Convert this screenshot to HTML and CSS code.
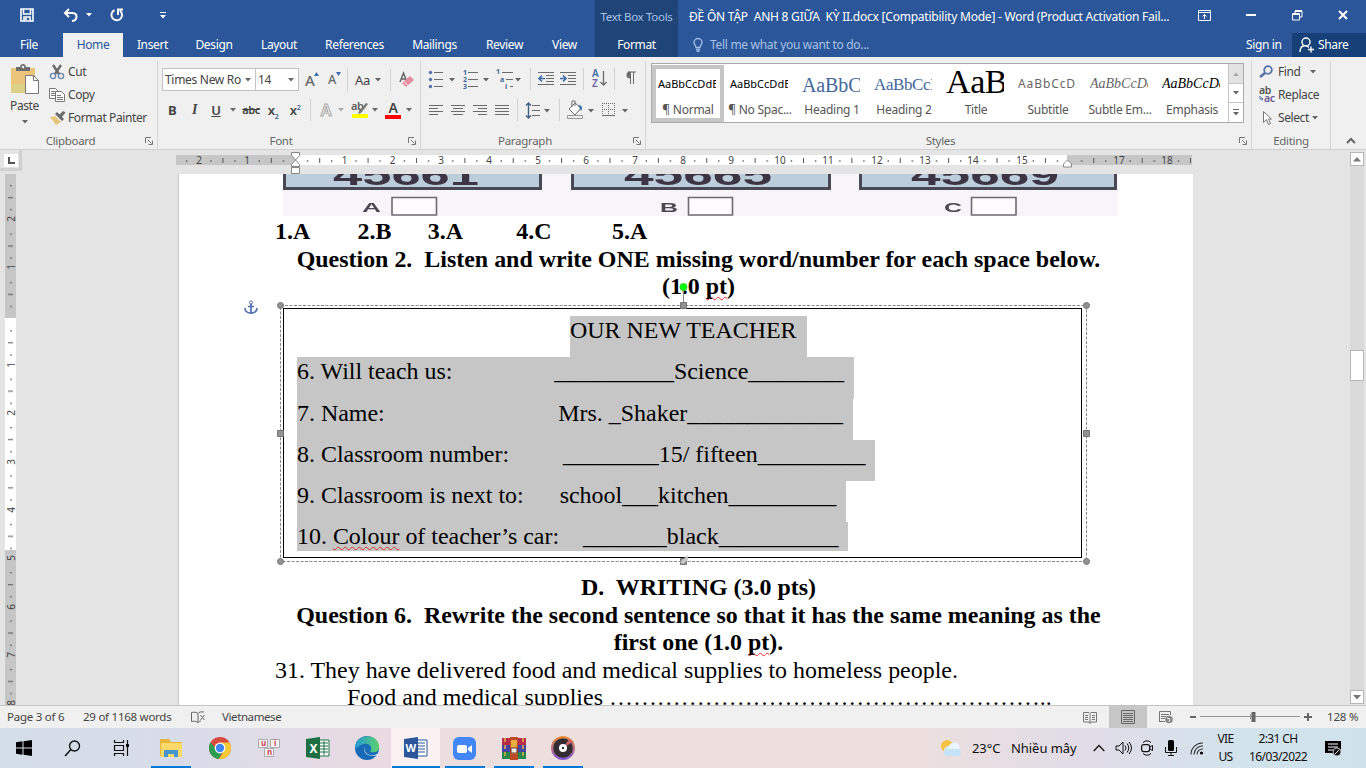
FILE: index.html
```html
<!DOCTYPE html>
<html lang="vi">
<head>
<meta charset="utf-8">
<title>ĐỀ ÔN TẬP ANH 8 GIỮA KỲ II.docx - Word</title>
<link rel="stylesheet" href="styles.css">
</head>
<body>
<svg class="defs" width="0" height="0">
  <symbol id="caret" viewBox="0 0 6 4"><path d="M0 0h6L3 3.4z" fill="#666"/></symbol>
  <symbol id="launch" viewBox="0 0 8 8"><path d="M.5 6V.5H6M3 3l3.500 3.500M7.500 3.500v4h-4" fill="none" stroke="#777"/></symbol>
</svg>

<header class="head">
  <div class="title-row">
    <svg class="ic save" width="14" height="14"><path d="M1 1h12v12H1zM3.500 1v5h7V1M4 13V9h6v4M6 10v2" fill="none" stroke="#fff" stroke-width="1.600"/></svg>
    <svg class="ic undo" width="15" height="13"><path d="M6 0L2 4l4 4M2 4h7c6 0 6 7 0 8" fill="none" stroke="#fff" stroke-width="2"/></svg>
    <svg class="ic undo-caret" width="6" height="4"><path d="M0 0h6L3 3.400z" fill="#fff"/></svg>
    <svg class="ic redo" width="14" height="14"><path d="M4.500 2.200a5.300 5.300 0 1 0 5.500.600M8 7V1.500h5" fill="none" stroke="#fff" stroke-width="1.900"/></svg>
    <svg class="ic custom" width="6" height="7"><path d="M0 .5h6" stroke="#fff"/><path d="M0 3h6L3 6.400z" fill="#fff"/></svg>
    <span class="ctx-name">Text Box Tools</span>
    <span class="doc-name">ĐỀ ÔN TẬP&nbsp; ANH 8 GIỮA&nbsp; KỲ II.docx [Compatibility Mode] - Word (Product Activation Fail...</span>
    <svg class="ic win-opts" width="13" height="11"><path d="M.5.500h12v10H.5zM.5 2.500h12M6.500 9V4.500M4.500 6.500l2-2 2 2" fill="none" stroke="#fff"/></svg>
    <svg class="ic win-min" width="10" height="2"><path d="M0 1h10" stroke="#fff" stroke-width="2"/></svg>
    <svg class="ic win-max" width="11" height="11"><path d="M3 3V1h7v6H8M.5 4h7v6h-7z" fill="none" stroke="#fff"/><path d="M3 1h7M.5 4h7" stroke="#fff" stroke-width="2"/></svg>
    <svg class="ic win-close" width="10" height="10"><path d="M1 1l8 8M9 1L1 9" stroke="#fff" stroke-width="2"/></svg>
  </div>
  <nav class="tabs">
    <span class="tab file">File</span><span class="tab home">Home</span><span class="tab insert">Insert</span><span class="tab design">Design</span><span class="tab layout">Layout</span><span class="tab refs">References</span><span class="tab mail">Mailings</span><span class="tab review">Review</span><span class="tab view">View</span><span class="tab format">Format</span>
    <svg class="bulb" width="10" height="14"><path d="M3 9.500C3 7 1 7 1 4.500a4 4 0 0 1 8 0C9 7 7 7 7 9.500zM3 11.500h4M3.500 13.200h3" fill="none" stroke="#9db9e4" stroke-width="1.400"/></svg>
    <span class="tell">Tell me what you want to do...</span>
    <span class="signin">Sign in</span>
    <span class="share"><svg width="16" height="16"><path d="M1 15c0-4 2-6 4.500-6.500M7 1a4 4 0 1 1 0 8 4 4 0 0 1 0-8M8 9l2 1.500M12 9.500v6M9 12.500h6" fill="none" stroke="#fff" stroke-width="1.400"/></svg>Share</span>
  </nav>
</header>

<section class="ribbon">
  <div class="group clipboard">
    <div class="paste">
      <svg width="30" height="32"><path d="M1 4h24v25H1z" fill="#eac57a"/><path d="M1 20h14v9H1z" fill="#dcd287"/><path d="M6 7V3h4c0-4 6-4 6 0h4v4z" fill="#6d6d6d"/><circle cx="13" cy="3" r="1.300" fill="#f0f0f0"/><path d="M15.500 11.500h8l5 5v13h-13z" fill="#fff" stroke="#777"/><path d="M23.500 11.500v5h5" fill="none" stroke="#777"/></svg>
      <span>Paste</span><svg class="car" width="6" height="4"><use href="#caret"/></svg>
    </div>
    <div class="clip-list">
      <div><svg width="16" height="16"><path d="M4 1l6 9M12 1L6 10" stroke="#6a6a6a" stroke-width="2.400"/><circle cx="4" cy="12" r="2.600" fill="none" stroke="#6d87ab" stroke-width="1.400"/><circle cx="12" cy="12" r="2.600" fill="none" stroke="#6d87ab" stroke-width="1.400"/></svg><span>Cut</span></div>
      <div><svg width="16" height="16"><path d="M.5 1.500h6l2 2v8h-8zM2 4.500h4M2 6.500h4M2 8.500h4" fill="#fff" stroke="#777"/><path d="M6.500 4.500h6l3 3v7h-9zM8 8.500h4M8 10.500h6M8 12.500h6" fill="#fff" stroke="#777"/></svg><span>Copy</span></div>
      <div><svg width="17" height="16"><path d="M1 7l5-1 6 6-5 3z" fill="#e6c67b"/><path d="M6 4l2-2 7 7-2 2z" fill="#6b6b6b"/><path d="M10 5l4-4 2.500 1.500-4 5z" fill="#6b6b6b"/></svg><span>Format Painter</span></div>
    </div>
    <div class="caption">Clipboard</div><svg class="launch" width="8" height="8"><use href="#launch"/></svg>
  </div>

  <div class="group font">
    <div class="row r1">
      <span class="combo face">Times New Ro<svg width="6" height="4"><use href="#caret"/></svg></span><span class="combo size">14<svg width="6" height="4"><use href="#caret"/></svg></span>
      <span class="grow">A<svg width="5" height="4"><path d="M0 4h5L2.500 0z" fill="#3f6fae"/></svg></span>
      <span class="shrink">A<svg width="5" height="4"><path d="M0 0h5L2.500 4z" fill="#3f6fae"/></svg></span>
      <i class="sep s1"></i><span class="case">Aa</span><svg class="car" width="6" height="4"><use href="#caret"/></svg><i class="sep s2"></i>
      <svg class="eraser" width="16" height="16"><path d="M1 10L4.500 1 8 10M2.500 7h4" fill="none" stroke="#666" stroke-width="1.500"/><path d="M3 11l8-7 4 4-8 7z" fill="#e78ba0"/><path d="M5 9.500l4 4" stroke="#fff"/></svg>
    </div>
    <div class="row r2">
      <b class="w24">B</b><em class="w21">I</em><u class="w22">U</u><span class="w12"><svg width="6" height="4"><use href="#caret"/></svg></span><s class="w24">abc</s><span class="w20 xs">x<sub>2</sub></span><span class="w24 xs">x<sup>2</sup></span><i class="sep s3"></i>
      <span class="w24 hollow">A</span><svg class="pale" width="6" height="4"><use href="#caret"/></svg>
      <span class="hilite"><svg width="18" height="18"><text x="0" y="9" font-size="11" font-weight="600" fill="#5f5f5f">ab</text><path d="M15 2l2 1-7 9-3 1 1-3z" fill="#777"/><path d="M1 13h16v4H1z" fill="#ff0"/></svg></span><svg width="6" height="4"><use href="#caret"/></svg>
      <span class="fcolor">A</span><svg class="last" width="6" height="4"><use href="#caret"/></svg>
    </div>
    <div class="caption">Font</div><svg class="launch" width="8" height="8"><use href="#launch"/></svg>
  </div>

  <div class="group para">
    <svg class="prow1" width="216" height="24" fill="none" stroke="#6b6b6b">
      <path d="M7 5.500h9M7 12.500h9M7 19.500h9M41 5.500h10M41 12.500h10M41 19.500h10M75 5.500h11M79 12.500h7M83 19.500h3" />
      <g fill="#5673a8" stroke="none"><circle cx="3.500" cy="5.500" r="1.700"/><circle cx="3.500" cy="12.500" r="1.700"/><circle cx="3.500" cy="19.500" r="1.700"/></g>
      <g fill="#3e6595" stroke="none" font-size="7" font-weight="700"><text x="36" y="8">1</text><text x="36" y="15">2</text><text x="36" y="22">3</text><text x="69" y="7">1</text><text x="73" y="15">a</text><text x="78" y="22">i</text></g>
      <g fill="#666" stroke="none"><path d="M22 11h6l-3 3.400zM56 11h6l-3 3.400zM88 11h6l-3 3.400z"/></g>
      <path d="M103.500 1v22M156.500 1v22M187.500 1v22" stroke="#d0d0d0"/>
      <path d="M111 5.500h16M119 8.500h8M119 11.500h8M119 14.500h8M111 17.500h16M133 5.500h16M141 8.500h8M141 11.500h8M141 14.500h8M133 17.500h16"/>
      <path d="M118 11.500h-6m3-3l-3 3 3 3M133 11.500h6m-3-3l3 3-3 3" stroke="#416ca6" stroke-width="1.700"/>
      <g stroke="none" font-size="10" font-weight="600"><text x="165" y="10" fill="#416ca6">A</text><text x="165" y="20" fill="#7161a5">Z</text></g><path d="M176.500 4v14m-3-3l3 3 3-3" stroke-width="1.300"/>
      <path d="M203.500 5v12M206.500 5v12M201 5h8" /><path d="M203 4.500a3.500 3.500 0 0 0 0 7z" fill="#6b6b6b" stroke="none"/>
    </svg>
    <svg class="prow2" width="216" height="24" fill="none" stroke="#6b6b6b">
      <path d="M2 6.500h14M2 9.500h9M2 12.500h14M2 15.500h9M24 6.500h14M26 9.500h10M24 12.500h14M26 15.500h10M46 6.500h14M51 9.500h9M46 12.500h14M51 15.500h9M68 6.500h14M68 9.500h14M68 12.500h14M68 15.500h14M105 6.500h8M105 11.500h8M105 16.500h8"/>
      <path d="M101.500 4v15m-2.500-12.500l2.500-2.500 2.500 2.500M99 16.500l2.500 2.500 2.500-2.500" stroke="#426280" stroke-width="1.400"/>
      <g fill="#666" stroke="none"><path d="M117 10h6l-3 3.400zM161 10h6l-3 3.400zM195 10h6l-3 3.400z"/></g>
      <path d="M90.500 0v22M132.500 0v22" stroke="#d0d0d0"/>
      <path d="M142 10l6-6 6 5-6 7zM145 8V2h3v5" fill="#fff"/><path d="M151 6c4 0 5 3 3 6z" fill="#3d6da9" stroke="none"/><path d="M140.500 16.500h15v3h-15z" stroke="#999"/>
      <path d="M175.500 4v12M181.500 4v12M187.500 4v12M175 4.500h13M175 10.500h13" stroke-dasharray="1 1"/><path d="M175 16.500h13"/>
    </svg>
    <div class="caption">Paragraph</div><svg class="launch" width="8" height="8"><use href="#launch"/></svg>
  </div>

  <div class="group styles">
    <div class="gallery">
      <div class="style on"><p class="pv n">AaBbCcDdE</p><span>¶ Normal</span></div>
      <div class="style"><p class="pv n">AaBbCcDdE</p><span>¶ No Spac...</span></div>
      <div class="style"><p class="pv h1">AaBbC</p><span>Heading 1</span></div>
      <div class="style"><p class="pv h2">AaBbCcD</p><span>Heading 2</span></div>
      <div class="style"><p class="pv ti">AaB</p><span>Title</span></div>
      <div class="style"><p class="pv st">AaBbCcD</p><span>Subtitle</span></div>
      <div class="style"><p class="pv se">AaBbCcDd</p><span>Subtle Em...</span></div>
      <div class="style"><p class="pv em">AaBbCcDd</p><span>Emphasis</span></div>
      <div class="gscroll"><div class="off"><svg width="6" height="4"><path d="M0 4h6L3 .6z" fill="#aaa"/></svg></div><div><svg width="6" height="4"><use href="#caret"/></svg></div><div><svg width="6" height="7"><path d="M0 .5h6" stroke="#666"/><path d="M0 3h6L3 6.400z" fill="#666"/></svg></div></div>
    </div>
    <div class="caption">Styles</div><svg class="launch" width="8" height="8"><use href="#launch"/></svg>
  </div>

  <div class="group editing">
    <div class="edit-list">
      <div><svg width="16" height="14"><circle cx="9" cy="5" r="3.800" fill="none" stroke="#5673a8" stroke-width="1.800"/><path d="M6 8l-5 4" stroke="#5673a8" stroke-width="2.600"/></svg><span class="find">Find</span><svg width="6" height="4"><use href="#caret"/></svg></div>
      <div><svg width="16" height="18"><text x="0" y="8" font-size="10.500" font-weight="600" fill="#555">ab</text><text x="5" y="16" font-size="10.500" font-weight="600" fill="#6b5c96">ac</text><path d="M1 10v3h3M2.500 11.500L4 13l-1.500 1.500" stroke="#3d6da9" fill="none"/></svg><span class="repl">Replace</span></div>
      <div><svg width="16" height="16"><path d="M4.500 1.500v11l3-3 2 5 2-1-2-4.500h3z" fill="#fff" stroke="#777"/></svg><span class="sel">Select</span><svg width="6" height="4"><use href="#caret"/></svg></div>
    </div>
    <div class="caption">Editing</div>
  </div>
  <svg class="collapse" width="10" height="7"><path d="M1 6l4-4 4 4" fill="none" stroke="#666" stroke-width="2"/></svg>
</section>

<main class="work">
  <div class="side">
    <div class="corner"><svg width="14" height="13"><path d="M5 3v6h6" fill="none" stroke="#555" stroke-width="2"/></svg></div>
    <svg class="vruler" width="11" height="531">
      <defs><pattern id="vt" width="11" height="48.380" patternUnits="userSpaceOnUse" y="-0.750"><path d="M5 12.500h2M5 36.500h2M3 24.500h5" stroke="#555"/></pattern></defs>
      <path d="M0 0h11v531H0z" fill="#c6c6c6"/><path d="M0 144h11v232H0z" fill="#fff"/><path d="M0 0h11v531H0z" fill="url(#vt)"/>
      <g class="num"><text transform="translate(10 45)rotate(-90)">2</text><text transform="translate(10 93)rotate(-90)">1</text><text transform="translate(10 191)rotate(-90)">1</text><text transform="translate(10 239)rotate(-90)">2</text><text transform="translate(10 288)rotate(-90)">3</text><text transform="translate(10 336)rotate(-90)">4</text><text transform="translate(10 384)rotate(-90)">5</text><text transform="translate(10 433)rotate(-90)">6</text><text transform="translate(10 481)rotate(-90)">7</text><text transform="translate(10 529)rotate(-90)">8</text></g>
    </svg>
  </div>
  <div class="canvas">
    <svg class="hruler" width="1016" height="24">
      <defs><pattern id="ht" width="48.380" height="24" patternUnits="userSpaceOnUse" x="22.740"><path d="M12.100 10v2M36.300 10v2M24.200 8v5" stroke="#555"/></pattern></defs>
      <path d="M0 5h1016v10H0z" fill="#c6c6c6"/><path d="M119 5h772v10H119z" fill="#fff"/><path d="M0 5h1016v10H0z" fill="url(#ht)"/>
      <g class="num"><text x="23" y="14">2</text><text x="71" y="14">1</text><text x="168.500" y="14">1</text><text x="216.500" y="14">2</text><text x="265" y="14">3</text><text x="313" y="14">4</text><text x="362" y="14">5</text><text x="410" y="14">6</text><text x="459" y="14">7</text><text x="507" y="14">8</text><text x="555" y="14">9</text><text x="604" y="14">10</text><text x="652" y="14">11</text><text x="701" y="14">12</text><text x="749" y="14">13</text><text x="797" y="14">14</text><text x="846" y="14">15</text><text x="943" y="14">17</text><text x="991" y="14">18</text></g>
      <path d="M115.500 2.500h8v3l-4 4.500-4-4.500zM115.500 16.500v-2l4-4.500 4 4.500v2zM115.500 17.500h8v6h-8zM887.500 17v-3l4-4 4 4v3z" fill="#fff" stroke="#888"/>
    </svg>
    <article class="page">
      <svg class="scan" width="835" height="42">
        <path d="M0 0h835v42H0z" fill="#f7f4fa"/>
        <g fill="#bccddc" stroke="#4b4855" stroke-width="3"><path d="M1.500-5v19.500h256V-5z"/><path d="M289.500-5v19.500h257V-5z"/><path d="M577.500-5v19.500h255V-5z"/></g>
        <g class="digits"><text x="50" y="10.500" textLength="146" lengthAdjust="spacingAndGlyphs">45661</text><text x="341" y="10.500" textLength="148" lengthAdjust="spacingAndGlyphs">45665</text><text x="628" y="10.500" textLength="148" lengthAdjust="spacingAndGlyphs">45669</text></g>
        <g class="abc"><text x="79" y="38" textLength="19" lengthAdjust="spacingAndGlyphs">A</text><text x="377" y="38" textLength="18" lengthAdjust="spacingAndGlyphs">B</text><text x="661" y="38" textLength="18" lengthAdjust="spacingAndGlyphs">C</text></g>
        <g fill="#fdfbfe" stroke="#6d6a72" stroke-width="1.600"><path d="M109 23.500h44.500v17.500h-44.500zM405.500 23.500h44v17.500h-44zM688.500 23.500h44.500v17.500h-44.500z"/></g>
      </svg>
      <div class="text">
        <p class="bold answers">1.A        2.B      3.A         4.C          5.A</p>
        <p class="bold mid">Question 2.  Listen and write ONE missing word/number for each space below.</p>
        <p class="bold mid">(1.0 <span class="typo">pt</span>)</p>
      </div>
      <div class="box">
        <svg class="anchor" width="14" height="15"><path d="M7 4v9M4 6.500h6M1 8c0 7 12 7 12 0" fill="none" stroke="#4f6fae" stroke-width="1.700"/><circle cx="7" cy="2.500" r="1.500" fill="none" stroke="#4f6fae"/></svg>
        <div class="mid"><p class="hl">OUR NEW TEACHER</p></div>
        <p class="hl">6. Will teach us:                 __________Science________</p>
        <p class="hl">7. Name:                             Mrs. _Shaker_____________</p>
        <p class="hl">8. Classroom number:         ________15/ fifteen_________</p>
        <p class="hl">9. Classroom is next to:      school___kitchen_________</p>
        <p class="hl end">10. <span class="typo">Colour</span> of teacher’s car:    _______black__________</p>
        <svg class="frame" width="816" height="284"><path d="M5.500 24.500h806v256h-806z" fill="none" stroke="#888" stroke-dasharray="3 1.500"/><path d="M408.500 8v14" stroke="#888"/><circle cx="408.500" cy="6" r="3.700" fill="#0f0" stroke="#5a5" stroke-width=".5"/>
          <g fill="#929292" stroke="#747474"><circle cx="5.500" cy="24.500" r="3"/><circle cx="811.500" cy="24.500" r="3"/><circle cx="5.500" cy="280.500" r="3"/><circle cx="811.500" cy="280.500" r="3"/><path d="M405.500 21.500h6v6h-6zM2.500 149.500h6v6h-6zM808.500 149.500h6v6h-6zM405.500 277.500h6v6h-6z"/></g><path d="M405 281l8-7v5l-5 4z" fill="#c6c6c6"/></svg>
      </div>
      <div class="text">
        <p class="bold mid">D.  WRITING (3.0 pts)</p>
        <p class="bold mid">Question 6.  Rewrite the second sentence so that it has the same meaning as the</p>
        <p class="bold mid">first one (1.0 <span class="typo">pt</span>).</p>
        <p>31. They have delivered food and medical supplies to homeless people.</p>
        <p class="indent">Food and medical supplies ………………………………………………..</p>
      </div>
    </article>
  </div>
  <div class="vscroll"><div class="sb"><svg width="8" height="5"><path d="M0 4.500h8L4 0z" fill="#777"/></svg></div><div class="thumb"></div><div class="sb"><svg width="8" height="5"><path d="M0 0h8L4 4.500z" fill="#777"/></svg></div></div>
</main>

<footer class="status">
  <span class="pg">Page 3 of 6</span><span class="wc">29 of 1168 words</span>
  <svg class="proof" width="15" height="14"><path d="M7 12.500C5 11 3 11 .5 11.500v-9C3 2 5 2 7 3.500zM7 3.500C8 2 10 1.500 13 2M7 12.500c1-1 2-1.500 3-1.500M9.500 5l4 5M13.500 5l-4 5" fill="none" stroke="#666"/></svg>
  <span class="lang">Vietnamese</span>
  <svg class="read" width="14" height="13"><path d="M7 12.500L6 11H.5V1.500H6l1 1 1-1h5.500V11H8zM7 3v9M2 4.500h3M2 6.500h3M2 8.500h3M9 4.500h3M9 6.500h3M9 8.500h3" fill="none" stroke="#777"/></svg>
  <span class="print"><svg width="14" height="14"><path d="M.5.500h13v13H.5zM2 3.500h10M2 5.500h10M2 7.500h10M2 9.500h10M2 11.500h10" fill="none" stroke="#666"/></svg></span>
  <svg class="web" width="15" height="14"><path d="M.5 11.500v-10h11V5M2 4.500h8M2 6.500h5M2 8.500h4M0 11.500h6" fill="none" stroke="#777"/><circle cx="10" cy="9.500" r="3.800" fill="#888"/><path d="M8 8l3 1-1 3" stroke="#eee" fill="none"/></svg>
  <svg class="zoomer" width="124" height="12"><path d="M1 6h6M115 6h8M119 2v8" stroke="#666" stroke-width="2"/><path d="M11 5.500h100M61.500 3v5" stroke="#999"/><path d="M62.500 1h4v10h-4z" fill="#666"/></svg>
  <span class="pct">128 %</span>
</footer>

<footer class="taskbar">
  <div class="slot"><svg width="16" height="16"><path d="M0 2.300l6.500-1v6.200H0zM7.500 1.200L16 0v7.500H7.500zM0 8.500h6.500v6.200L0 13.700zM7.500 8.500H16V16l-8.500-1.200z"/></svg></div>
  <div class="slot"><svg width="17" height="17"><circle cx="10.500" cy="6" r="5" fill="none" stroke="#111" stroke-width="1.400"/><path d="M7 9.500L1 16" stroke="#111" stroke-width="1.500"/></svg></div>
  <div class="slot"><svg width="17" height="16"><path d="M1.500 0v2.500h9V0M1.500 5.500h9v5h-9zM1.500 16v-2.500h9V16M14.500 0v16" fill="none" stroke="#111" stroke-width="1.200"/><path d="M13 4h3v3h-3z"/></svg></div>
  <div class="slot open explorer"><svg width="22" height="20"><path d="M0 1h9l2 3h11v14H0z" fill="#e9b63c"/><path d="M1 5h21v14H1z" fill="#fbd867"/><path d="M4 19v-7h14v7h-4v-3H8v3z" fill="#4595cf"/></svg></div>
  <div class="slot"><svg width="22" height="22"><circle cx="11" cy="11" r="11" fill="#d94b3f"/><path d="M1.500 5.500A11 11 0 0 0 9.500 22l5-9-7-1z" fill="#2c9c50"/><path d="M11 5.500h9.500A11 11 0 0 1 10 22l5.500-9z" fill="#f6ca35"/><circle cx="11" cy="11" r="5.400" fill="#fff"/><circle cx="11" cy="11" r="4.200" fill="#4285f4"/></svg></div>
  <div class="slot"><svg width="24" height="20"><g fill="#f4f4f4" stroke="#aaa"><path d="M1.500 1.500h9v8h-9zM13.500 1.500h9v8h-9zM7.500 10.500h9v8h-9z"/></g><g font-size="8" font-weight="700" fill="#cf3f57"><text x="4" y="8">u</text><text x="17" y="8">i</text><text x="10" y="17">n</text></g></svg></div>
  <div class="slot"><svg width="24" height="22"><path d="M12 3h11v16H12z" fill="#fff" stroke="#217346"/><path d="M13 6h9M13 9h9M13 12h9M13 15h9M18 4v14" stroke="#217346"/><path d="M0 2l14-2v22L0 20z" fill="#1d7044"/><text x="3.500" y="15.500" font-size="12" font-weight="700" fill="#fff">X</text></svg></div>
  <div class="slot"><svg width="24" height="24"><defs><linearGradient id="eg" x2="1"><stop stop-color="#249bd8"/><stop offset="1" stop-color="#5bd06c"/></linearGradient></defs><circle cx="12" cy="12" r="12" fill="#176bb7"/><path d="M0 12C1-4 24-3 24 11c0 5-5 6-9 5 3-4 0-9-6-8-5 1-9 6-9 4z" fill="url(#eg)"/><path d="M11 10c-4 5 2 12 11 8l1 1c-10 3-17-3-12-9z" fill="#e9f2f8"/></svg></div>
  <div class="slot open active"><svg width="24" height="22"><path d="M12 3h11v16H12z" fill="#fff" stroke="#2b579a"/><path d="M14 6h7M14 9h7M14 12h7M14 15h7" stroke="#2b579a"/><path d="M0 2l14-2v22L0 20z" fill="#2b579a"/><text x="1.500" y="15" font-size="11" font-weight="700" fill="#fff">W</text></svg></div>
  <div class="slot open zoomapp"><svg width="23" height="23"><rect width="23" height="23" rx="6" fill="#4287f5"/><rect x="4" y="8" width="10" height="8" rx="2" fill="#fff"/><path d="M15 11l4-3v8l-4-3z" fill="#fff"/></svg></div>
  <div class="slot open"><svg width="24" height="23"><path d="M0 1h24v7H0z" fill="#b82c4b"/><path d="M0 8h24v7H0z" fill="#4745a0"/><path d="M0 15h24v7H0z" fill="#228748"/><path d="M3 1v21M21 1v21" stroke="#e5b14c" stroke-width="1.500" stroke-dasharray="4 3"/><path d="M8 0h8v23H8z" fill="#bd4a25"/><path d="M9 3h6v14H9z" fill="#e9ad3f"/><path d="M9 11h6v5H9z" fill="#eee" stroke="#633"/></svg></div>
  <div class="slot open"><svg width="24" height="24"><defs><linearGradient id="mg" y2="1" x2="0"><stop stop-color="#ef8b34"/><stop offset="1" stop-color="#8058d8"/></linearGradient></defs><circle cx="12" cy="12" r="12" fill="url(#mg)"/><circle cx="12" cy="12" r="9.800" fill="#332d32"/><path d="M12 12l6-9 4 3z" fill="#c66068"/><circle cx="12" cy="12" r="4" fill="#fff"/><circle cx="12" cy="12" r="1.200" fill="#333"/></svg></div>
  <div class="tray">
    <svg class="sun" width="22" height="18"><circle cx="7" cy="7" r="6" fill="#f6c244"/><circle cx="9" cy="12" r="5" fill="#d8edfa"/><circle cx="14" cy="9" r="5.500" fill="#e9f6fd"/><rect x="4" y="10" width="17" height="7" rx="3.500" fill="#c5e3f6"/></svg>
    <span class="temp">23°C</span><span class="sky">Nhiều mây</span>
    <svg class="up" width="12" height="8"><path d="M.7 7L6 1.500 11.300 7" fill="none" stroke="#111" stroke-width="1.300"/></svg>
    <svg class="spk" width="17" height="14"><path d="M1 5h3l4-4v12l-4-4H1zM10 4.500q2 2.500 0 5M12 2.500q3.500 4.500 0 9M14 1q5 6 0 12" fill="none" stroke="#111"/></svg>
    <svg class="cam" width="12" height="16"><path d="M2 2.500q4-3.500 8 0M2 13.500q4 3.500 8 0" fill="none" stroke="#111"/><rect x=".6" y="4.600" width="8" height="7" rx="2" fill="none" stroke="#111" stroke-width="1.200"/><path d="M9 7l2.500-1.500v5L9 9" fill="none" stroke="#111"/></svg>
    <svg class="mic" width="12" height="16"><rect x="3" width="6" height="11" rx="1.500"/><path d="M.5 7v5.500h11V7M6 12v3M3 15.500h6" fill="none" stroke="#111"/></svg>
    <svg class="wifi" width="14" height="13"><path d="M1 12.500A11.500 11.500 0 0 1 13 1M4 12.500A8.500 8.500 0 0 1 13 4M7 12.500a5.500 5.500 0 0 1 6-5.500" fill="none" stroke="#333" stroke-width="1.100"/><circle cx="11.500" cy="11" r="1.600"/></svg>
    <div class="two kb"><span>VIE</span><span>US</span></div>
    <div class="two clock"><span>2:31 CH</span><span>16/03/2022</span></div>
    <svg class="note" width="17" height="17"><path d="M0 1h16v10l-5 5-4-3H0z"/><path d="M3 4h10M3 7h10M3 10h5" stroke="#fff"/><circle cx="12" cy="12" r="4" fill="#111" stroke="#dde" stroke-width=".8"/><path d="M9.500 14.500l5-5" stroke="#dde"/></svg>
  </div>
</footer>
</body>
</html>
```
FILE: styles.css
```css
*{box-sizing:border-box}
body{margin:0;width:1366px;height:768px;overflow:hidden;font:12px/16px "Noto Sans","Open Sans",sans-serif;color:#444;background:#e4e4e4;display:flex;flex-direction:column}
p{margin:0}
svg{display:block;flex:none;overflow:visible}
span{white-space:nowrap}
.defs{position:absolute}

/* title bar and tabs */
.head{height:57px;flex:none;background:linear-gradient(90deg,transparent 595px,#1f4478 595px 678px,transparent 678px),#2b579a;color:#fff}
.title-row{height:33px;display:flex;align-items:center}
.ic{margin-bottom:3px}
.save{margin-left:20px}
.undo{margin-left:29px}
.undo-caret{margin-left:8px}
.redo{margin-left:18px}
.custom{margin-left:36px}
.ctx-name{width:83px;margin-left:429px;text-align:center;color:#a9c1e6;font-size:11.500px;letter-spacing:-.3px}
.doc-name{margin-left:11px;width:509px;letter-spacing:-.225px}
.win-min{margin-left:35px}
.win-max{margin-left:36px}
.win-close{margin-left:35px}
.tabs{height:24px;display:flex;align-items:center;letter-spacing:-.35px}
.tab{text-align:center;height:24px;line-height:23px;flex:none}
.file{width:58px;margin-right:5px}
.home{width:60px;background:#f0f0f0;color:#2b579a}
.insert{width:59px}
.design{width:64px}
.layout{width:66px}
.refs{width:85px}
.mail{width:75px}
.review{width:65px}
.view{width:55px;margin-right:3px}
.format{width:83px}
.bulb{margin-left:15px}
.tell{margin-left:7px;width:536px;color:#a9c1e6;letter-spacing:-.3px}
.signin{width:46px}
.share{width:74px;height:24px;background:#154078;display:flex;align-items:center;gap:3px;padding-left:7px}

/* ribbon */
.ribbon{height:93px;flex:none;background:#f0f0f0;border-bottom:1px solid #d0d0d0;display:flex;letter-spacing:-.4px}
.group{position:relative;height:88px;margin-top:4px;border-right:1px solid #d4d4d4;flex:none}
.caption{position:absolute;left:-16px;right:0;bottom:0;text-align:center;color:#666;font-size:11.500px;line-height:16px;letter-spacing:-.3px}
.launch{position:absolute;right:4px;bottom:4px}
.clipboard{width:158px;display:flex}
.paste{width:49px;display:flex;flex-direction:column;align-items:center;padding-top:3px}
.paste span{margin-top:2px}
.paste .car{margin-top:6px}
.clip-list{margin-top:-1px}
.clip-list div{display:flex;align-items:center;height:23px;gap:2px}
.clip-list svg{width:17px}
.font{width:263px}
.row{display:flex;align-items:center}
.r1{height:23px;margin:7px 0 0 4px}
.combo{height:23px;border:1px solid #c3c3c3;background:#fff;display:flex;align-items:center;justify-content:space-between;padding:0 4px 0 2px}
.face{width:94px;letter-spacing:-.3px}
.size{width:44px;margin-left:-1px}
.grow,.shrink{display:flex;font-weight:500;color:#666}
.grow{font-size:15px;margin-left:6px;width:15px}
.shrink{font-size:12.500px;margin-left:8px;width:14px}
.sep{width:1px;height:22px;background:#d0d0d0}
.s1{margin-left:5px}
.case{font-size:13px;margin:0 3px 0 7px;width:17px}
.s2{margin-left:9px}
.eraser{margin-left:8px}
.r2{height:22px;margin:8px 0 0 2px;font-size:13px}
.r2>*{flex:none;text-align:center}
.w12{width:12px}.w20{width:20px}.w21{width:21px}.w22{width:22px}.w24{width:24px}
.w12{display:flex;justify-content:center}
.r2 b,.r2 u,.xs{font-weight:600}
.r2 b{font-weight:700}
.r2 em{font:italic 700 14px "Liberation Serif",serif}
.r2 s{font-size:11px;font-weight:600}
.xs sub,.xs sup{font-size:7px;line-height:0;color:#3e6595}
.s3{margin:0 3px}
.hollow{font-size:16px;font-weight:600;color:#f8f8f8;-webkit-text-stroke:1px #aaa}
.pale{opacity:.5}
.hilite{width:24px;margin-left:4px;display:flex;justify-content:center}
.fcolor{width:24px;margin-left:3px;font-size:14px;font-weight:600;line-height:14px;background:linear-gradient(red,red) 4px 100%/16px 4px no-repeat;height:18px}
.last{margin-left:1px}
.para{width:225px;padding:6px 0 0 6px}
.prow2{margin-top:8px}
.styles{width:606px;padding:2px 0 0 5px}
.gallery{width:593px;height:60px;border:1px solid #ababab;background:#fff;display:flex}
.gallery .style{width:72px;height:58px;padding:2px 6px 0;text-align:center}
.gallery .on{height:57px;margin-top:1px;padding:1px 2px 0;outline:4px solid #c6c6c6;outline-offset:-4px}
.pv{height:34px;width:58px;overflow:hidden;white-space:nowrap;color:#000;text-align:left;line-height:36px}
.on .pv{margin-left:4px}
.style span{display:block;color:#555;margin-top:2px;letter-spacing:-.25px}
.style:not(.on) span{margin:2px -4px 0}
.n{font-size:11px;letter-spacing:0}
.h1,.h2{font-family:"Liberation Serif",serif;color:#44689c;padding-top:1px}
.h1{font-size:20px;letter-spacing:-.1px}
.h2{font-size:17px}
.ti{font:34px/32px "Liberation Serif",serif;letter-spacing:-.4px}
.st{color:#666;letter-spacing:.9px}
.se,.em{font:italic 14px/36px "Liberation Serif",serif;letter-spacing:0}
.se{color:#666}
.gscroll{width:15px;border-left:1px solid #c6c6c6;margin-left:auto;display:grid;grid-template-rows:20px 19px 19px}
.gscroll div{display:grid;place-items:center;border-bottom:1px solid #c6c6c6}
.gscroll div:last-child{border:0}
.gscroll .off{background:#e3e3e3}
.editing{width:79px}
.editing .caption{left:0}
.edit-list{padding-left:7px;margin-top:-1px}
.edit-list div{display:flex;align-items:center;height:23px;gap:3px}
.find{width:29px}
.edit-list .find+svg{margin-left:0}
.collapse{margin:80px 0 0 15px}

/* document area */
.work{height:555px;flex:none;display:flex;background:#e4e4e4}
.side{width:176px}
.corner{width:22px;height:21px;border:solid #d0d0d0;border-width:0 3px 3px 0;padding:4px 0 0 4px;background:#e4e4e4}
.corner svg{background:#fff}
.vruler{margin:3px 0 0 5px}
.num{font:10px "Noto Sans",sans-serif;fill:#444;text-anchor:middle}
.canvas{width:1017px;overflow:hidden}
.page{margin:0 0 0 2px;width:1016px;height:531px;background:#fff;border:solid #c6c6c6;border-width:0 1px;overflow:hidden;color:#000;font:23.950px/27.500px "Liberation Serif","Times New Roman",serif}
.page p{white-space:pre}
.scan{margin-left:104px;filter:blur(.5px);overflow:hidden}
.digits{font:700 30px "Liberation Sans",sans-serif;fill:#3d3444}
.abc{font:700 12px "Liberation Sans",sans-serif;fill:#4c4752}
.text{padding-left:96px;width:943px;margin-top:2px}
.bold{font-weight:700}
.answers{word-spacing:.08px}
.mid{text-align:center}
.indent{padding-left:72px}
.typo{text-decoration:underline wavy #e02b2b 1px;text-underline-offset:2px;text-decoration-skip-ink:none}
.box{position:relative;width:799px;height:250px;margin:7.500px 0 16px 104px;border:1px solid #000;padding:7px 12px 0 13px}
.box .hl{background:#c6c6c6;width:max-content;height:41.250px;padding:1px 10px 0 0}
.box .mid .hl{margin-left:273px}
.box .end{height:29px}
.anchor{position:absolute;left:-40px;top:-9px}
.frame{position:absolute;left:-9px;top:-28px}
.vscroll{margin:2px 2px 0 auto;width:14px;display:flex;flex-direction:column;background:#dadada;height:552px}
.sb{height:14px;background:#fff;border:1px solid #b5b5b5;display:grid;place-items:center}
.thumb{height:31px;background:#fff;border:1px solid #b5b5b5;margin:184px 0 auto}

/* status bar */
.status{height:23px;flex:none;background:#f0f0f0;border-top:1px solid #c6c6c6;display:flex;align-items:center;font-size:11.500px}
.pg{margin-left:7px;width:76px;letter-spacing:-.25px}
.wc{width:108px;letter-spacing:-.25px}
.lang{margin-left:16px;width:861px;letter-spacing:-.4px}
.print{margin-left:12px;width:38px;height:22px;background:#c6c6c6;display:grid;place-items:center}
.web{margin-left:12px}
.zoomer{margin-left:15px}
.pct{margin-left:14px;letter-spacing:-.2px}

/* taskbar */
.taskbar{height:40px;flex:none;display:flex;color:#111;background:linear-gradient(90deg,#d3dee9,#dadce8 220px,#e9dae2 370px,#ecdfde 480px 920px,#e0dce8 1090px,#d2e3ec 1240px,#cfe2eb)}
.slot{width:49px;height:40px;display:grid;place-items:center;flex:none}
.slot:nth-child(1),.slot:nth-child(2){width:48px}
.slot:nth-child(3){width:50px}
.open{background:linear-gradient(#0078d7,#0078d7) center 100%/40px 2px no-repeat}
.active{background:linear-gradient(#0078d7,#0078d7) center 100%/48px 2px no-repeat,#f9f1f2}
.tray{flex:1;display:flex;align-items:center;margin-left:353px}
.temp{margin-left:10px;width:39px;font-size:13px;letter-spacing:-.1px}
.sky{width:82px;font-size:13px;letter-spacing:-.05px}
.spk{margin-left:10px}
.cam{margin-left:9px}
.mic{margin-left:12px}
.wifi{margin-left:13px}
.two{display:flex;flex-direction:column;align-items:center;line-height:18px}
.kb{margin-left:13px;width:17px;letter-spacing:-.6px}
.clock{margin-left:15px;width:58px;letter-spacing:-.6px}
.note{margin-left:18px}
```
